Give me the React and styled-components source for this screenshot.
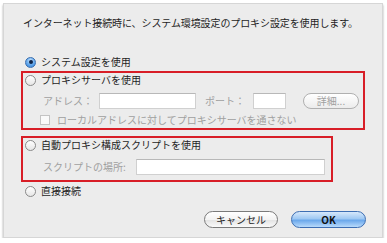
import React from "react";
import styled, { createGlobalStyle, css } from "styled-components";

const Global = createGlobalStyle`
  html, body { margin: 0; padding: 0; background: #ffffff; }
  body { font-family: "Noto Sans CJK JP", "Noto Sans", sans-serif; }
`;

const Panel = styled.div`
  box-sizing: border-box;
  width: 380px;
  height: 235px;
  margin: 3px 0 0 3px;
  background: #ececec;
  border: 1px solid #d6d6d6;
  box-shadow: 0 2px 2px rgba(0,0,0,0.35);
  padding: 13px 0 0 17px;
  display: flex;
  flex-direction: column;
  color: #1e1e1e;
  font-size: 10px;
  line-height: 12px;
`;

const Title = styled.div`
  margin-left: 2px;
  letter-spacing: -0.1px;
`;

const Options = styled.div`
  margin-top: 26px;
  display: flex;
  flex-direction: column;
`;

const Row = styled.div`
  display: flex;
  align-items: center;
  height: 14px;
  padding-left: 4px;
  gap: 5px;
  margin-top: ${(p) => p.$mt || 0}px;
`;

const Box = styled.div`
  box-sizing: border-box;
  width: ${(p) => p.$w}px;
  border: 2px solid #d81e27;
  margin-top: ${(p) => p.$mt}px;
  padding-bottom: ${(p) => p.$pb}px;
  display: flex;
  flex-direction: column;
  & > ${Row} { padding-left: 2px; }
`;

const Radio = styled.span`
  box-sizing: border-box;
  width: 11px;
  height: 11px;
  border-radius: 50%;
  flex: none;
  position: relative;
  ${(p) =>
    p.$on
      ? css`
          background: radial-gradient(circle at 50% 30%, #d3e8fb 0%, #6fb0ef 45%, #2d7fd8 100%);
          border: 1px solid #3a6fb0;
          &::after {
            content: "";
            position: absolute;
            left: 2.5px;
            top: 2.5px;
            width: 4px;
            height: 4px;
            border-radius: 50%;
            background: #0d2347;
          }
        `
      : css`
          background: linear-gradient(#ffffff, #e6e6e6);
          border: 1px solid #8a8a8a;
        `}
`;

const Label = styled.span`
  color: ${(p) => (p.$dim ? "#a0a0a0" : "#1e1e1e")};
  white-space: nowrap;
  margin-left: ${(p) => p.$ml || 0}px;
`;

const FieldRow = styled.div`
  display: flex;
  align-items: center;
  height: 16px;
  margin-top: ${(p) => p.$mt}px;
  padding-left: 20px;
`;

const Input = styled.div`
  box-sizing: border-box;
  width: ${(p) => p.$w}px;
  height: 16px;
  background: #ffffff;
  border: 1px solid #d0d0d0;
  border-top-color: #b8b8b8;
  margin-left: ${(p) => p.$ml}px;
  flex: none;
`;

const PillButton = styled.button`
  box-sizing: border-box;
  width: ${(p) => p.$w}px;
  height: ${(p) => p.$h || 16}px;
  margin-left: ${(p) => p.$ml || 0}px;
  border-radius: 9px;
  font-family: inherit;
  font-size: 10px;
  line-height: 12px;
  padding: 0;
  flex: none;
  ${(p) =>
    p.$primary
      ? css`
          border: 1px solid #3d6eb3;
          background: linear-gradient(#d6e8fb 0%, #9ec8f3 45%, #6ba8eb 55%, #b8dafb 100%);
          color: #111;
          font-weight: bold;
        `
      : p.$dim
      ? css`
          border: 1px solid #b0b0b0;
          background: linear-gradient(#ffffff, #ececec);
          color: #a0a0a0;
        `
      : css`
          border: 1px solid #7a7a7a;
          background: linear-gradient(#ffffff 0%, #f3f3f3 50%, #e4e4e4 55%, #fafafa 100%);
          color: #1e1e1e;
        `}
`;

const CheckRow = styled.div`
  display: flex;
  align-items: center;
  height: 14px;
  margin-top: 4px;
  padding-left: 17px;
  gap: 7px;
`;

const Check = styled.span`
  box-sizing: border-box;
  width: 10px;
  height: 10px;
  border: 1px solid #c4c4c4;
  background: #fafafa;
  flex: none;
`;

const Buttons = styled.div`
  display: flex;
  justify-content: flex-end;
  margin-top: 13px;
  margin-right: 16px;
  gap: 13px;
`;

export default function App() {
  return (
    <>
      <Global />
      <Panel>
        <Title>インターネット接続時に、システム環境設定のプロキシ設定を使用します。</Title>
        <Options>
          <Row>
            <Radio $on />
            <Label>システム設定を使用</Label>
          </Row>
          <Box $w={344} $mt={2} $pb={1}>
            <Row>
              <Radio />
              <Label>プロキシサーバを使用</Label>
            </Row>
            <FieldRow $mt={6}>
              <Label $dim>アドレス：</Label>
              <Input $w={97} $ml={6} />
              <Label $dim $ml={9}>ポート：</Label>
              <Input $w={33} $ml={8} />
              <PillButton $dim $w={56} $ml={17}>詳細...</PillButton>
            </FieldRow>
            <CheckRow>
              <Check />
              <Label $dim>ローカルアドレスに対してプロキシサーバを通さない</Label>
            </CheckRow>
          </Box>
          <Box $w={312} $mt={6} $pb={5}>
            <Row>
              <Radio />
              <Label>自動プロキシ構成スクリプトを使用</Label>
            </Row>
            <FieldRow $mt={7}>
              <Label $dim>スクリプトの場所:</Label>
              <Input $w={189} $ml={10} />
            </FieldRow>
          </Box>
          <Row $mt={2}>
            <Radio />
            <Label>直接接続</Label>
          </Row>
        </Options>
        <Buttons>
          <PillButton $w={74} $h={17}>キャンセル</PillButton>
          <PillButton $primary $w={75} $h={17}>OK</PillButton>
        </Buttons>
      </Panel>
    </>
  );
}
